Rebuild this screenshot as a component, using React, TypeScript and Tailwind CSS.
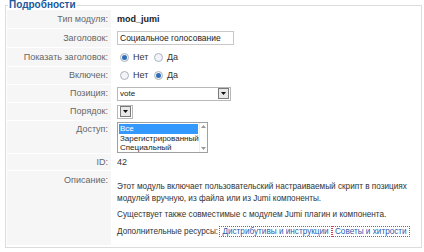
import React from "react";

const Radio = ({ checked }: { checked?: boolean }) => (
  <span className="inline-flex w-[9px] h-[9px] rounded-full border border-[#a9b3c0] bg-[#f2f4f7] items-center justify-center">
    {checked && <span className="w-[5px] h-[5px] rounded-full bg-[#2f6db5]" />}
  </span>
);

const DropBtn = () => (
  <span className="flex w-[11px] h-[11px] border border-[#7a7a7a] bg-[#e8e8e8] items-center justify-center">
    <svg width="5" height="3" viewBox="0 0 5 3"><path d="M0 0h5L2.5 3z" fill="#111" /></svg>
  </span>
);

const Row = ({ label, children, h, top }: { label: string; children?: React.ReactNode; h: string; top?: boolean }) => (
  <div className={`flex ${h} border-b border-white`}>
    <div className={`w-[104px] shrink-0 bg-[#f6f6f6] text-right pr-[3px] text-[#666] flex justify-end ${top ? "items-start pt-[3px]" : "items-center"}`}>
      {label}
    </div>
    <div className={`pl-[6px] flex ${top ? "items-start" : "items-center"} text-[#333] grow`}>{children}</div>
  </div>
);

export default function App() {
  return (
    <div className="w-[424px] h-[252px] bg-white relative overflow-hidden" style={{ fontFamily: '"Liberation Sans", Arial, sans-serif' }}>
      <fieldset className="absolute left-[5px] top-0 w-[417px] h-[248px] border border-[#dcdcdc] px-[1px] pb-[3px]">
        <legend className="text-[10px] font-bold text-[#20589c] ml-[1px] px-[1px] leading-[10px]">Подробности</legend>
        <div className="text-[9px] leading-[11px]">
          <Row label="Тип модуля:" h="h-[19px]">
            <span className="font-bold text-[#222] text-[9px]">mod_jumi</span>
          </Row>
          <Row label="Заголовок:" h="h-[19px]">
            <span className="w-[117px] h-[14px] border border-[#c8c8c8] flex items-center px-[2px] text-[8.5px] text-[#222]">Социальное голосование</span>
          </Row>
          <Row label="Показать заголовок:" h="h-[19px]">
            <span className="flex items-center ml-[3px]"><Radio checked /><span className="ml-[4px] w-[21px]">Нет</span><Radio /><span className="ml-[4px]">Да</span></span>
          </Row>
          <Row label="Включен:" h="h-[18px]">
            <span className="flex items-center ml-[3px]"><Radio /><span className="ml-[4px] w-[21px]">Нет</span><Radio checked /><span className="ml-[4px]">Да</span></span>
          </Row>
          <Row label="Позиция:" h="h-[18px]">
            <span className="w-[114px] h-[14px] border border-[#b8b8b8] flex items-center justify-between pl-[2px] pr-[1px] text-[8px] text-[#222]">vote<DropBtn /></span>
          </Row>
          <Row label="Порядок:" h="h-[18px]">
            <span className="w-[16px] h-[14px] border border-[#b8b8b8] flex items-center justify-end pr-[1px]"><DropBtn /></span>
          </Row>
          <Row label="Доступ:" h="h-[33px]" top>
            <span className="mt-[1px] w-[91px] h-[31px] border border-[#a0a0a0] flex text-[8px] leading-[9.5px] text-[#222]">
              <span className="grow flex flex-col pt-[1px]">
                <span className="bg-[#3399ff] text-white pl-[1px] mx-[1px]">Все</span>
                <span className="pl-[2px]">Зарегистрированный</span>
                <span className="pl-[2px]">Специальный</span>
              </span>
              <span className="w-[8px] border-l border-[#eee] flex flex-col justify-between items-center py-[2px]">
                <svg width="5" height="3" viewBox="0 0 5 3"><path d="M0 3h5L2.5 0z" fill="#999" /></svg>
                <svg width="5" height="3" viewBox="0 0 5 3"><path d="M0 0h5L2.5 3z" fill="#999" /></svg>
              </span>
            </span>
          </Row>
          <Row label="ID:" h="h-[17px]">
            <span>42</span>
          </Row>
          <div className="flex h-[74px]">
            <div className="w-[104px] shrink-0 bg-[#f6f6f6] text-right pr-[3px] text-[#666] pt-[4px]">Описание:</div>
            <div className="pl-[6px] text-[#333] pt-[10px] text-[8.2px] leading-[12px] whitespace-nowrap">
              <p>Этот модуль включает пользовательский настраиваемый скрипт в позициях<br />модулей вручную, из файла или из Jumi компоненты.</p>
              <p className="mt-[4px]">Существует также совместимые с модулем Jumi плагин и компонента.</p>
              <p className="mt-[5px]">Дополнительные ресурсы: <span className="text-[#2a5db0] outline outline-1 outline-dotted outline-[#d04050] px-[2px]">Дистрибутивы и инструкции</span> <span className="text-[#2a5db0] outline outline-1 outline-dotted outline-[#d04050] px-[2px]">Советы и хитрости</span></p>
            </div>
          </div>
        </div>
      </fieldset>
    </div>
  );
}
